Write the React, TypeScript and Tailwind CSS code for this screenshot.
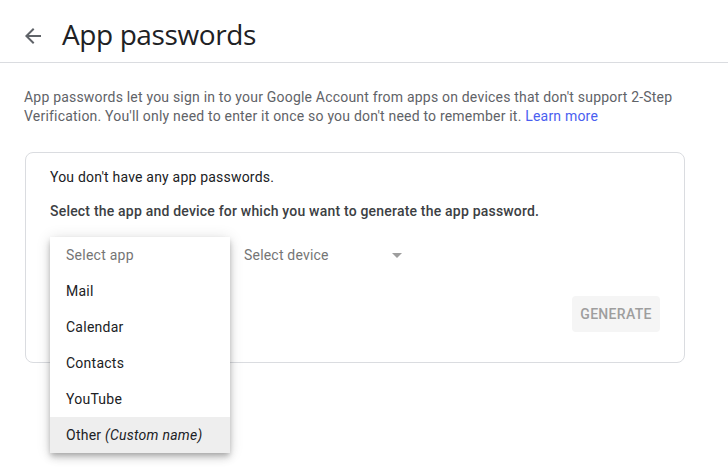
import React from 'react';

const apps = ['Mail', 'Calendar', 'Contacts', 'YouTube'];

const ArrowBack: React.FC = () => (
  <svg width="24" height="24" viewBox="0 0 24 24" fill="#5f6368">
    <path d="M20 11H7.83l5.59-5.59L12 4l-8 8 8 8 1.41-1.41L7.83 13H20v-2z" />
  </svg>
);

export default function App() {
  return (
    <div className="w-[728px] h-[468px] bg-white overflow-hidden font-['Roboto',sans-serif] text-[#202124] tracking-[0.2px]">
      {/* Header */}
      <div className="h-[63px] flex items-center border-b border-[#dadce0] pl-[21px]">
        <button className="w-6 h-6 flex items-center justify-center mt-[10px]">
          <ArrowBack />
        </button>
        <h1 className="ml-[17px] mt-[5px] text-[28px] leading-9 tracking-[-0.4px] text-[#202124] font-['Open_Sans',sans-serif]">
          App passwords
        </h1>
      </div>

      <div className="px-6">
        <p className="mt-[25px] text-[14px] leading-[19px] text-[#5f6368]">
          App passwords let you sign in to your Google Account from apps on devices that don't support 2-Step
          Verification. You'll only need to enter it once so you don't need to remember it.{' '}
          <a className="text-[#4a5ef0]">Learn more</a>
        </p>

        {/* Card */}
        <div className="mt-[26px] ml-px w-[660px] h-[211px] border border-[#dadce0] rounded-lg px-6 pt-[14px]">
          <p className="text-[14px] leading-5 text-[#202124]">You don't have any app passwords.</p>
          <p className="mt-[14px] text-[14px] leading-5 font-medium text-[#3c4043]">
            Select the app and device for which you want to generate the app password.
          </p>

          <div className="mt-[16px] flex items-center h-9">
            <div className="relative w-[195px] h-9">
              <div className="absolute left-0 top-0 w-[180px] bg-white z-10 tracking-[0.25px] shadow-[0_3px_5px_-1px_rgba(0,0,0,0.2),0_5px_8px_0_rgba(0,0,0,0.14),0_1px_14px_0_rgba(0,0,0,0.12)]">
                <div className="h-9 flex items-center px-4 text-[14px] text-[#757575]">Select app</div>
                {apps.map((a) => (
                  <div key={a} className="h-9 flex items-center px-4 text-[14px] text-[#202124]">
                    {a}
                  </div>
                ))}
                <div className="h-9 flex items-center px-4 text-[14px] text-[#202124] bg-[#eeeeee]">
                  Other&nbsp;<span className="italic">(Custom name)</span>
                </div>
              </div>
            </div>
            <div className="-ml-px w-[164px] h-9 flex items-center justify-between">
              <span className="text-[14px] text-[#757575]">Select device</span>
              <span className="w-0 h-0 border-l-[5px] border-r-[5px] border-t-[5px] border-l-transparent border-r-transparent border-t-[#9e9e9e] mr-[6px]" />
            </div>
          </div>

          <div className="mt-[23px] flex justify-end">
            <button className="w-[88px] h-9 rounded bg-[#f5f5f5] text-[14px] font-medium text-[#9e9e9e] tracking-[0.3px] uppercase">
              Generate
            </button>
          </div>
        </div>
      </div>
    </div>
  );
}
